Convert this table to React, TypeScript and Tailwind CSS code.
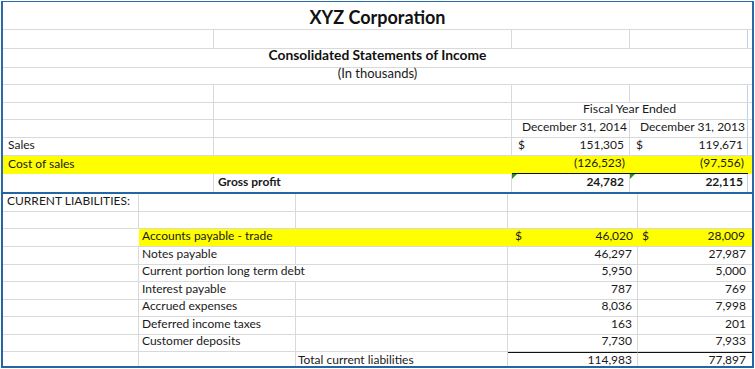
import React from "react";

const GRID = "border-[#d9d9d9]";

type CellProps = {
  w: number;
  line?: boolean;
  lineColor?: string;
  className?: string;
  children?: React.ReactNode;
  style?: React.CSSProperties;
};

function Cell({ w, line = true, lineColor, className = "", children, style }: CellProps) {
  return (
    <div
      className={`relative flex h-full shrink-0 items-end pb-[1px] whitespace-nowrap ${
        line ? `border-r ${lineColor ?? GRID}` : ""
      } ${className}`}
      style={{ width: w, ...style }}
    >
      {children}
    </div>
  );
}

function Row({ h, children, yellow = false, gridBottom = true }: { h: number; children: React.ReactNode; yellow?: boolean; gridBottom?: boolean }) {
  return (
    <div
      className={`flex shrink-0 ${gridBottom ? `border-b ${GRID}` : ""} ${yellow ? "bg-[#ffff00]" : ""}`}
      style={{ height: h }}
    >
      {children}
    </div>
  );
}

function Tri() {
  return (
    <div className="absolute left-0 top-0 h-0 w-0 border-t-[5px] border-r-[5px] border-t-[#2e8b2e] border-r-transparent" />
  );
}

// top columns
const T = [211, 298, 118, 118, 5];
// bottom columns
const B = [136, 157, 212, 130, 114];

export default function App() {
  const f = { fontFamily: "Lato, 'Open Sans', sans-serif" };
  return (
    <div className="h-[369px] w-[755px] bg-white text-[#1a1a1a]" style={f}>
      <div className="ml-[1px] pt-[1px] w-[753px]">
        {/* TOP SECTION */}
        <div className="border-t border-l-2 border-r-2 border-[#2b6aa8] text-[12px]">
          {/* title */}
          <Row h={28}>
            <div className="flex w-full items-center justify-center pt-[3px] text-[18px] font-bold text-[#111]">
              XYZ Corporation
            </div>
          </Row>
          <Row h={19}>
            <Cell w={T[0]} />
            <Cell w={T[1]} />
            <Cell w={T[2]} />
            <Cell w={T[3]} lineColor="border-[#b9d3ea]" />
            <Cell w={T[4]} line={false} />
          </Row>
          <Row h={19}>
            <div className="flex w-full items-end justify-center pb-[1px] text-[13.8px] font-bold text-[#111]">
              Consolidated Statements of Income
            </div>
          </Row>
          <Row h={17}>
            <div className="flex w-full items-end justify-center pb-[1px] text-[13px]">(In thousands)</div>
          </Row>
          <Row h={18}>
            <Cell w={T[0]} />
            <Cell w={T[1]} />
            <Cell w={T[2]} />
            <Cell w={T[3]} lineColor="border-[#b9d3ea]" />
            <Cell w={T[4]} line={false} />
          </Row>
          <Row h={17}>
            <Cell w={T[0]} />
            <Cell w={T[1]} />
            <Cell w={T[2] + T[3]} lineColor="border-[#b9d3ea]" className="justify-center text-[12.3px]">
              Fiscal Year Ended
            </Cell>
            <Cell w={T[4]} line={false} />
          </Row>
          <Row h={18}>
            <Cell w={T[0]} />
            <Cell w={T[1]} />
            <Cell w={T[2]} className="justify-end pr-[2px]">December 31, 2014</Cell>
            <Cell w={T[3]} lineColor="border-[#b9d3ea]" className="justify-end pr-[2px]">
              December 31, 2013
            </Cell>
            <Cell w={T[4]} line={false} />
          </Row>
          <Row h={18}>
            <Cell w={T[0]} className="pl-[5px]">Sales</Cell>
            <Cell w={T[1]} />
            <Cell w={T[2]} className="justify-between pl-[6px] pr-[5px]">
              <span>$</span>
              <span>151,305</span>
            </Cell>
            <Cell w={T[3]} lineColor="border-[#b9d3ea]" className="justify-between pl-[6px] pr-[4px]">
              <span>$</span>
              <span>119,671</span>
            </Cell>
            <Cell w={T[4]} line={false} />
          </Row>
          <Row h={18} yellow gridBottom={false}>
            <Cell w={T[0]} line={false} className="pl-[5px]">Cost of sales</Cell>
            <Cell w={T[1]} line={false} />
            <Cell w={T[2]} line={false} className="justify-end border-b border-b-[#111] pr-[5px]">
              (126,523)
            </Cell>
            <Cell w={T[3]} line={false} className="justify-end border-b border-b-[#111] pr-[4px]">
              (97,556)
            </Cell>
            <Cell w={T[4]} line={false} />
          </Row>
          <Row h={18} gridBottom={false}>
            <Cell w={T[0]} />
            <Cell w={T[1]} className="pl-[4px] font-bold">Gross profit</Cell>
            <Cell w={T[2]} className="justify-end pr-[5px] font-bold">
              <Tri />
              24,782
            </Cell>
            <Cell w={T[3]} lineColor="border-[#b9d3ea]" className="justify-end pr-[4px] font-bold">
              <Tri />
              22,115
            </Cell>
            <Cell w={T[4]} line={false} />
          </Row>
        </div>

        {/* BOTTOM SECTION */}
        <div className="border-2 border-[#2366a6] text-[12px]">
          <Row h={18}>
            <Cell w={B[0]} className="pl-[4px]">CURRENT LIABILITIES:</Cell>
            <Cell w={B[1]} />
            <Cell w={B[2]} />
            <Cell w={B[3]} />
            <Cell w={B[4]} line={false} />
          </Row>
          <Row h={17}>
            <Cell w={B[0]} />
            <Cell w={B[1]} />
            <Cell w={B[2]} />
            <Cell w={B[3]} />
            <Cell w={B[4]} line={false} />
          </Row>
          <Row h={18}>
            <Cell w={B[0]} line={false} className="bg-white" />
            <div className="flex h-full flex-1 bg-[#ffff00]">
              <Cell w={B[1]} line={false} className="pl-[3px]">Accounts payable - trade</Cell>
              <Cell w={B[2]} line={false} />
              <Cell w={B[3]} line={false} className="justify-between pl-[7px] pr-[5px]">
                <span>$</span>
                <span>46,020</span>
              </Cell>
              <Cell w={B[4] - 1} line={false} className="justify-between pl-[4px] pr-[6px]">
                <span>$</span>
                <span>28,009</span>
              </Cell>
            </div>
          </Row>
          {[
            ["Notes payable", "46,297", "27,987", 18],
            ["Current portion long term debt", "5,950", "5,000", 17],
            ["Interest payable", "787", "769", 18],
            ["Accrued expenses", "8,036", "7,998", 17],
            ["Deferred income taxes", "163", "201", 18],
            ["Customer deposits", "7,730", "7,933", 17],
          ].map(([label, a, b, h]) => (
            <Row key={label as string} h={h as number}>
              <Cell w={B[0]} />
              <Cell w={B[1]} line={label !== "Current portion long term debt"} className="pl-[3px]">
                {label}
              </Cell>
              <Cell w={B[2]} />
              <Cell w={B[3]} className="justify-end pr-[5px]">{a}</Cell>
              <Cell w={B[4]} line={false} className="justify-end pr-[6px]">{b}</Cell>
            </Row>
          ))}
          <div className="flex h-[14px] shrink-0 text-[12px] leading-[13px]">
            <Cell w={B[0]} className="!pb-0" />
            <Cell w={B[1]} className="!pb-0" />
            <Cell w={B[2]} className="!items-start !pb-0 pl-[2px] pt-[1px]">Total current liabilities</Cell>
            <Cell w={B[3]} className="!items-start justify-end border-t border-t-[#111] !pb-0 pr-[5px]">
              114,983
            </Cell>
            <Cell w={B[4]} line={false} className="!items-start justify-end border-t border-t-[#111] !pb-0 pr-[6px]">
              77,897
            </Cell>
          </div>
        </div>
      </div>
    </div>
  );
}
